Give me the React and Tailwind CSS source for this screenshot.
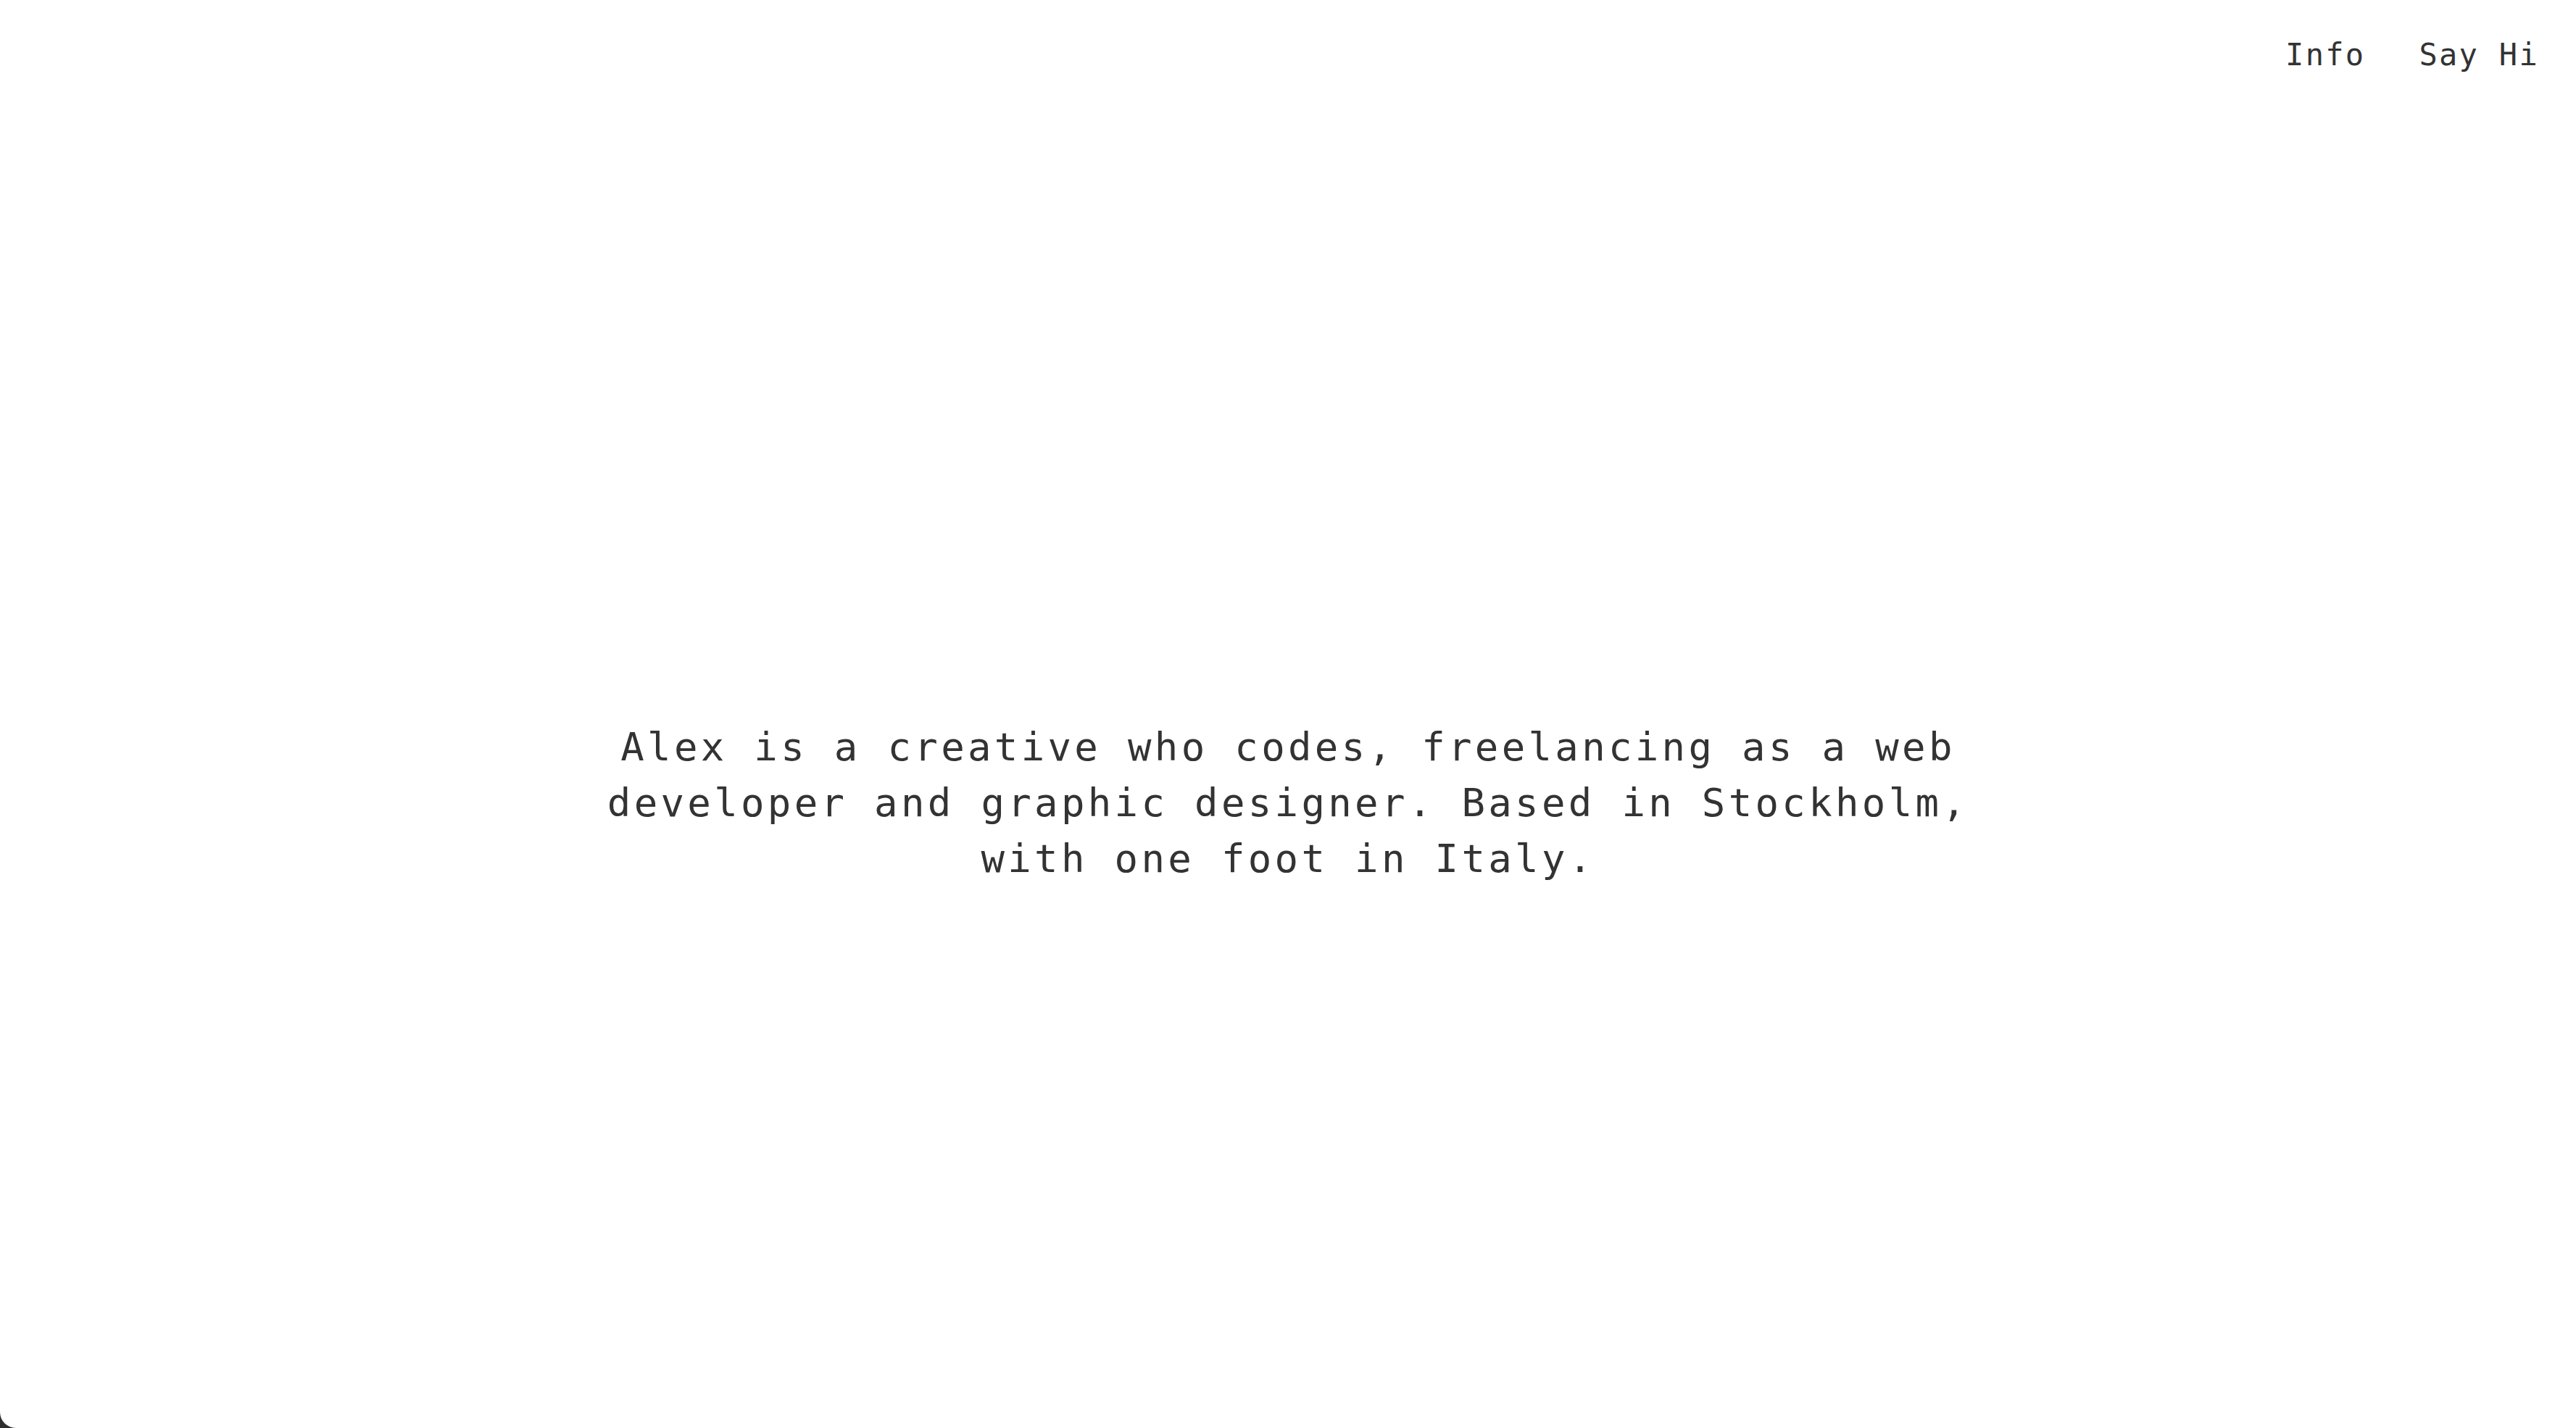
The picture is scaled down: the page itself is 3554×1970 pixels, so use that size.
export default function App() {
  const mono = { fontFamily: '"DejaVu Sans Mono", "Liberation Mono", monospace' };
  return (
    <div className="w-full h-[1970px] bg-[#2f2f2f]">
      <div
        className="w-full h-full bg-white rounded-bl-[22px] flex flex-col text-[#333333]"
        style={mono}
      >
        <header className="h-[245px] flex justify-end items-start pt-[55px] pr-[51px]">
          <nav className="flex gap-[74px] text-[42px] leading-[42px] tracking-[0.055em]">
            <a className="cursor-pointer">Info</a>
            <a className="cursor-pointer">Say Hi</a>
          </nav>
        </header>
        <main className="flex-1 flex items-center justify-center">
          <p className="w-[1960px] text-center text-[54px] leading-[77px] tracking-[0.08em]">
            Alex is a creative who codes, freelancing as a web developer and graphic designer. Based in Stockholm, with one foot in Italy.
          </p>
        </main>
      </div>
    </div>
  );
}
